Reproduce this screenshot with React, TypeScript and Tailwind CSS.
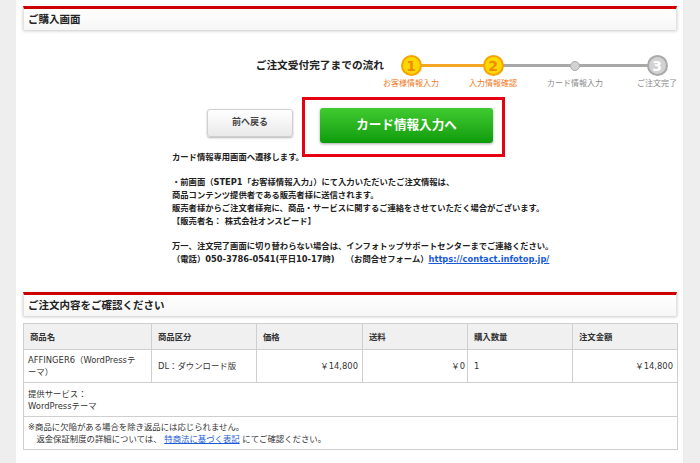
import React from "react";

const FONT = "font-['DejaVu_Sans','Noto_Sans_CJK_JP',sans-serif]";

function SectionHeader({ title }: { title: string }) {
  return (
    <div className="border-t-[3px] border-t-[#cc0000] border-x border-x-[#e3e3e3] bg-gradient-to-b from-white to-[#f6f6f6] shadow-[0_1px_3px_rgba(0,0,0,0.22)] h-[24px] px-[4px] flex items-center text-[10.5px] font-bold text-[#222]">
      {title}
    </div>
  );
}

function Step({
  label,
  done,
  num,
}: {
  label: string;
  done: boolean;
  num?: string;
}) {
  return (
    <div className="w-[50px] shrink-0 flex flex-col items-center relative z-10">
      <div className="h-[21px] flex items-center justify-center">
        {num ? (
          <div
            className={
              done
                ? "w-[21px] h-[21px] rounded-full bg-[#ffd700] border-2 border-[#f5a400] flex items-center justify-center text-[14px] leading-none font-bold text-[#f08a00]"
                : "w-[21px] h-[21px] rounded-full bg-[#d2d2d2] border-2 border-[#a9a9a9] flex items-center justify-center text-[14px] leading-none font-bold text-white"
            }
          >
            {num}
          </div>
        ) : (
          <div className="w-[10px] h-[10px] rounded-full bg-[#d2d2d2] border border-[#a9a9a9]" />
        )}
      </div>
      <div
        className={
          done
            ? "mt-[3px] text-[8px] leading-[10px] whitespace-nowrap text-[#f07a1e]"
            : "mt-[3px] text-[8px] leading-[10px] whitespace-nowrap text-[#8a8a8a]"
        }
      >
        {label}
      </div>
    </div>
  );
}

export default function App() {
  return (
    <div className={`flex w-[700px] h-[463px] overflow-hidden bg-[#eeeeee] ${FONT}`}>
      <div className="w-[16px] shrink-0" />
      <div className="w-[667px] shrink-0 bg-white pl-[7px] pr-[6px] pt-[6px]">
        <SectionHeader title="ご購入画面" />

        {/* steps */}
        <div className="flex items-start mt-[25px]">
          <div className="w-[361px] shrink-0 text-right text-[10.7px] leading-[21px] font-bold text-[#222]">
            ご注文受付完了までの流れ
          </div>
          <div className="relative shrink-0 flex gap-[32px] ml-[2px]">
            <div className="absolute left-[25px] top-[9px] w-[82px] h-[3px] bg-[#f5a623]" />
            <div className="absolute left-[107px] top-[9px] w-[164px] h-[3px] bg-[#a8a8a8]" />
            <Step label="お客様情報入力" done num="1" />
            <Step label="入力情報確認" done num="2" />
            <Step label="カード情報入力" done={false} />
            <Step label="ご注文完了" done={false} num="3" />
          </div>
        </div>

        {/* buttons */}
        <div className="flex items-start mt-[19px] ml-[184px]">
          <button className="mt-[1px] w-[86px] h-[28px] rounded-[3px] border border-[#d0d0d0] bg-gradient-to-b from-white to-[#e9e9e9] shadow-[0_1px_2px_rgba(0,0,0,0.3)] text-[9px] font-bold text-[#444]">
            前へ戻る
          </button>
          <div className="relative ml-[27px]">
            <button className="w-[173px] h-[35px] rounded-[3px] bg-gradient-to-b from-[#3fcb2f] to-[#0b9c0b] shadow-[0_1px_3px_rgba(0,0,0,0.35)] text-[12.6px] font-bold text-white">
              カード情報入力へ
            </button>
            <div className="absolute left-[-18px] top-[-11px] w-[203px] h-[60px] border-[3px] border-[#e50012] pointer-events-none" />
          </div>
        </div>

        {/* paragraph */}
        <div className="mt-[8px] ml-[149px] text-[8.3px] leading-[12.7px] font-bold text-[#222] whitespace-nowrap">
          <div>カード情報専用画面へ遷移します。</div>
          <div>&nbsp;</div>
          <div>・前画面（STEP1「お客様情報入力」）にて入力いただいたご注文情報は、</div>
          <div>商品コンテンツ提供者である販売者様に送信されます。</div>
          <div>販売者様からご注文者様宛に、商品・サービスに関するご連絡をさせていただく場合がございます。</div>
          <div>【販売者名： 株式会社オンスピード】</div>
          <div>&nbsp;</div>
          <div>万一、注文完了画面に切り替わらない場合は、インフォトップサポートセンターまでご連絡ください。</div>
          <div>
            （電話）050-3786-0541(平日10-17時){"\u3000 "}（お問合せフォーム）
            <a className="text-[#1a5bd8] underline" href="#">
              https://contact.infotop.jp/
            </a>
          </div>
        </div>

        <div className="mt-[27px]">
          <SectionHeader title="ご注文内容をご確認ください" />
        </div>

        {/* table */}
        <table className="mt-[7px] w-[654px] border-collapse table-fixed text-[8.4px] text-[#333]">
          <colgroup>
            <col className="w-[128px]" />
            <col className="w-[105px]" />
            <col className="w-[106px]" />
            <col className="w-[105px]" />
            <col className="w-[105px]" />
            <col className="w-[105px]" />
          </colgroup>
          <thead>
            <tr className="h-[26px] bg-[#f0f0f0] text-[#333]">
              <th className="border border-[#cfcfcf] text-left font-bold pl-[6px]">商品名</th>
              <th className="border border-[#cfcfcf] text-left font-bold pl-[6px]">商品区分</th>
              <th className="border border-[#cfcfcf] text-left font-bold pl-[6px]">価格</th>
              <th className="border border-[#cfcfcf] text-left font-bold pl-[6px]">送料</th>
              <th className="border border-[#cfcfcf] text-left font-bold pl-[6px]">購入数量</th>
              <th className="border border-[#cfcfcf] text-left font-bold pl-[6px]">注文金額</th>
            </tr>
          </thead>
          <tbody>
            <tr className="h-[33px]">
              <td className="border border-[#cfcfcf] pl-[4px] leading-[12px]">
                AFFINGER6（WordPressテ
                <br />
                ーマ）
              </td>
              <td className="border border-[#cfcfcf] pl-[6px]">DL：ダウンロード版</td>
              <td className="border border-[#cfcfcf] text-right pr-[4px]">￥14,800</td>
              <td className="border border-[#cfcfcf] text-right pr-[2px]">￥0</td>
              <td className="border border-[#cfcfcf] pl-[6px]">1</td>
              <td className="border border-[#cfcfcf] text-right pr-[4px]">￥14,800</td>
            </tr>
            <tr className="h-[34px]">
              <td colSpan={6} className="border border-[#cfcfcf] pl-[4px] leading-[12px]">
                提供サービス：
                <br />
                WordPressテーマ
              </td>
            </tr>
            <tr className="h-[33px]">
              <td colSpan={6} className="border border-[#cfcfcf] pl-[4px] leading-[12px]">
                ※商品に欠陥がある場合を除き返品には応じられません。
                <br />
                {"\u3000"}返金保証制度の詳細については、{" "}
                <a className="text-[#1a5bd8] underline" href="#">
                  特商法に基づく表記
                </a>{" "}
                にてご確認ください。
              </td>
            </tr>
          </tbody>
        </table>
      </div>
      <div className="flex-1" />
    </div>
  );
}
